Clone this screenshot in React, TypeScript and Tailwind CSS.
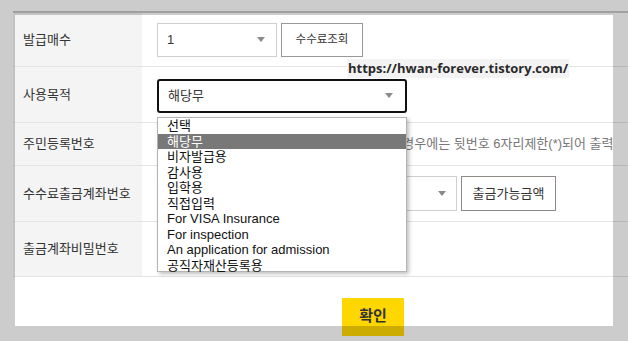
import React from 'react';

const options = [
  '선택',
  '해당무',
  '비자발급용',
  '감사용',
  '입학용',
  '직접입력',
  'For VISA Insurance',
  'For inspection',
  'An application for admission',
  '공직자재산등록용',
];

function Arrow() {
  return (
    <svg width="8" height="5" viewBox="0 0 8 5" className="shrink-0">
      <path d="M0 0h8L4 5z" fill="#8a8a8a" />
    </svg>
  );
}

function Row({ label, h, children }: { label: string; h: string; children?: React.ReactNode }) {
  return (
    <div className={`flex border-b border-[#e4e4e4] ${h}`}>
      <div className="w-[129px] shrink-0 bg-[#f4f4f4] pl-[10px] flex items-center text-[#333]">{label}</div>
      <div className="w-[471px] shrink-0 overflow-hidden pl-[15px] flex items-center gap-[4px] whitespace-nowrap">
        {children}
      </div>
      <div className="flex-1" />
    </div>
  );
}

export default function App() {
  return (
    <div className="relative w-[628px] h-[341px] overflow-hidden bg-white text-[13px] text-[#333] font-['Liberation_Sans','Noto_Sans_CJK_KR',sans-serif]">
      <div className="pt-[11px] pl-[13px]">
        <div className="border-t-2 border-[#c8c8c8]">
          <Row label="발급매수" h="h-[54px]">
            <div className="w-[120px] h-[34px] border border-[#cfcfcf] flex items-center justify-between pl-[9px] pr-[11px]">
              <span>1</span>
              <Arrow />
            </div>
            <button className="h-[34px] w-[82px] border border-[#999] text-[11.5px] text-[#333] bg-white">수수료조회</button>
          </Row>
          <Row label="사용목적" h="h-[56px]">
            <div className="w-[250px] h-[34px] mt-[2px] border-2 border-[#111] rounded-[3px] flex items-center justify-between pl-[9px] pr-[12px]">
              <span>해당무</span>
              <Arrow />
            </div>
          </Row>
          <Row label="주민등록번호" h="h-[43px]">
            <span className="text-[13px] text-[#777]">
              주민번호 뒷자리 미입력으로 해당없음 선택한 경우에는 뒷번호 6자리제한(*)되어 출력됩니다.
            </span>
          </Row>
          <Row label="수수료출금계좌번호" h="h-[56px]">
            <div className="w-[300px] h-[35px] border border-[#cfcfcf] flex items-center justify-end pr-[10px]">
              <Arrow />
            </div>
            <button className="h-[35px] w-[95px] border border-[#8f8a86] text-[13px] text-[#333] bg-white">출금가능금액</button>
          </Row>
          <Row label="출금계좌비밀번호" h="h-[55px]">
            <div className="w-[200px] h-[34px] border border-[#cfcfcf]" />
          </Row>
        </div>
        <div className="pt-[21px] pl-[329px]">
          <button className="w-[62px] h-[38px] bg-[#ffd700] text-[15px] font-bold text-[#333] pb-[2px]">확인</button>
        </div>
      </div>

      {/* open select list */}
      <ul className="absolute left-[157px] top-[117px] w-[250px] h-[155px] bg-white border border-[#b4b4b4] shadow-[2px_2px_4px_rgba(0,0,0,0.25)]">
        {options.map((o, i) => (
          <li
            key={o}
            className={`h-[15.5px] leading-[15.5px] pl-[9px] whitespace-nowrap ${i === 1 ? 'bg-[#787878] text-white' : 'text-[#111]'}`}
          >
            {o}
          </li>
        ))}
      </ul>

      {/* watermark */}
      <div className="absolute left-[347px] top-[59px] h-[19px] px-[1px] bg-[#f3f3f3] text-[13px] font-bold text-[#2a2a2a] leading-[19px] font-['Open_Sans',sans-serif]">
        https://hwan-forever.tistory.com/
      </div>

      {/* capture overlay */}
      <div className="absolute left-[15px] top-[15px] w-[598px] h-[311px] shadow-[0_0_0_9999px_rgba(0,0,0,0.2)] pointer-events-none" />
    </div>
  );
}
